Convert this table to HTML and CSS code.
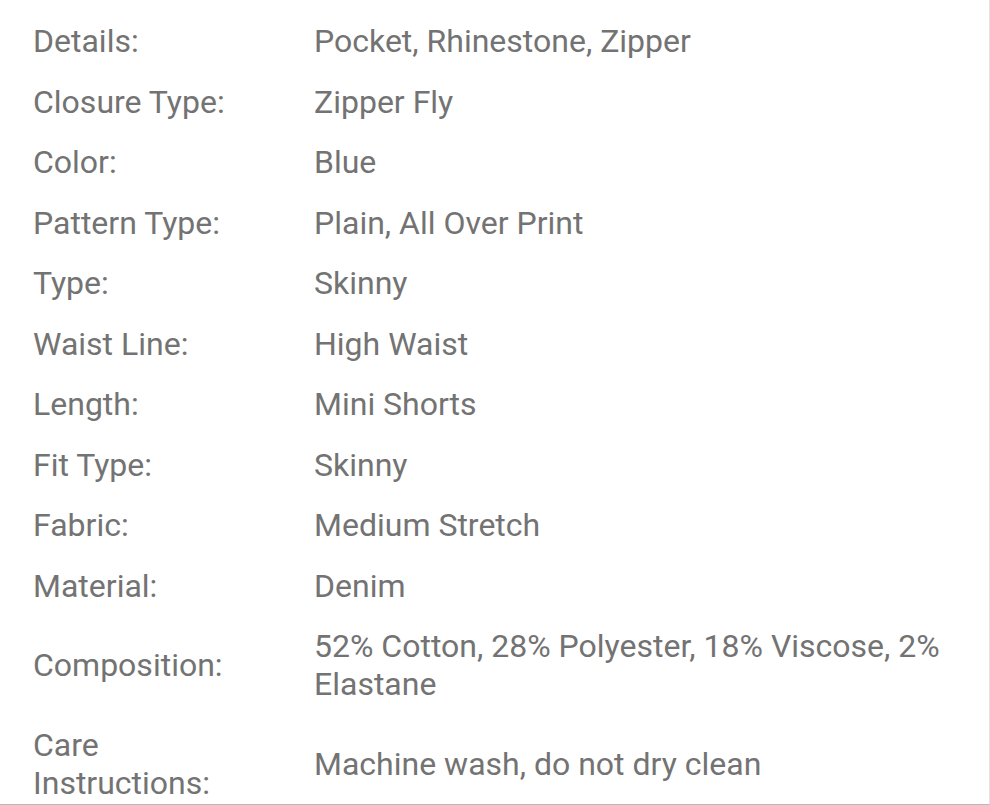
FILE: index.html
```html
<!DOCTYPE html>
<html lang="en">
<head>
<meta charset="utf-8">
<title>Product details</title>
<link rel="stylesheet" href="styles.css">
</head>
<body>
<div class="panel">
  <dl class="specs">
    <div class="row"><dt>Details:</dt><dd>Pocket, Rhinestone, Zipper</dd></div>
    <div class="row"><dt>Closure Type:</dt><dd>Zipper Fly</dd></div>
    <div class="row"><dt>Color:</dt><dd>Blue</dd></div>
    <div class="row"><dt>Pattern Type:</dt><dd>Plain, All Over Print</dd></div>
    <div class="row"><dt>Type:</dt><dd>Skinny</dd></div>
    <div class="row"><dt>Waist Line:</dt><dd>High Waist</dd></div>
    <div class="row"><dt>Length:</dt><dd>Mini Shorts</dd></div>
    <div class="row"><dt>Fit Type:</dt><dd>Skinny</dd></div>
    <div class="row"><dt>Fabric:</dt><dd>Medium Stretch</dd></div>
    <div class="row"><dt>Material:</dt><dd>Denim</dd></div>
    <div class="row"><dt>Composition:</dt><dd>52% Cotton, 28% Polyester, 18% Viscose, 2% Elastane</dd></div>
    <div class="row"><dt>Care Instructions:</dt><dd>Machine wash, do not dry clean</dd></div>
  </dl>
</div>
</body>
</html>
```
FILE: styles.css
```css
html, body {
  margin: 0;
  padding: 0;
  background: #ffffff;
}

.panel {
  box-sizing: border-box;
  width: 990px;
  height: 805px;
  overflow: hidden;
  border-right: 1px solid #e2e2e2;
  border-bottom: 1px solid #b9b9b9;
  padding: 11px 0 0 33px;
  font-family: Roboto, "Noto Sans", sans-serif;
  font-size: 32px;
  line-height: 38px;
  color: #737373;
}

.specs {
  margin: 0;
}

.row {
  display: grid;
  grid-template-columns: 281px 1fr;
  align-items: center;
}

.row dt,
.row dd {
  margin: 0;
  padding: 11.25px 0;
}

.row dt {
  padding-right: 40px;
}

.row dd {
  padding-right: 20px;
}
```
